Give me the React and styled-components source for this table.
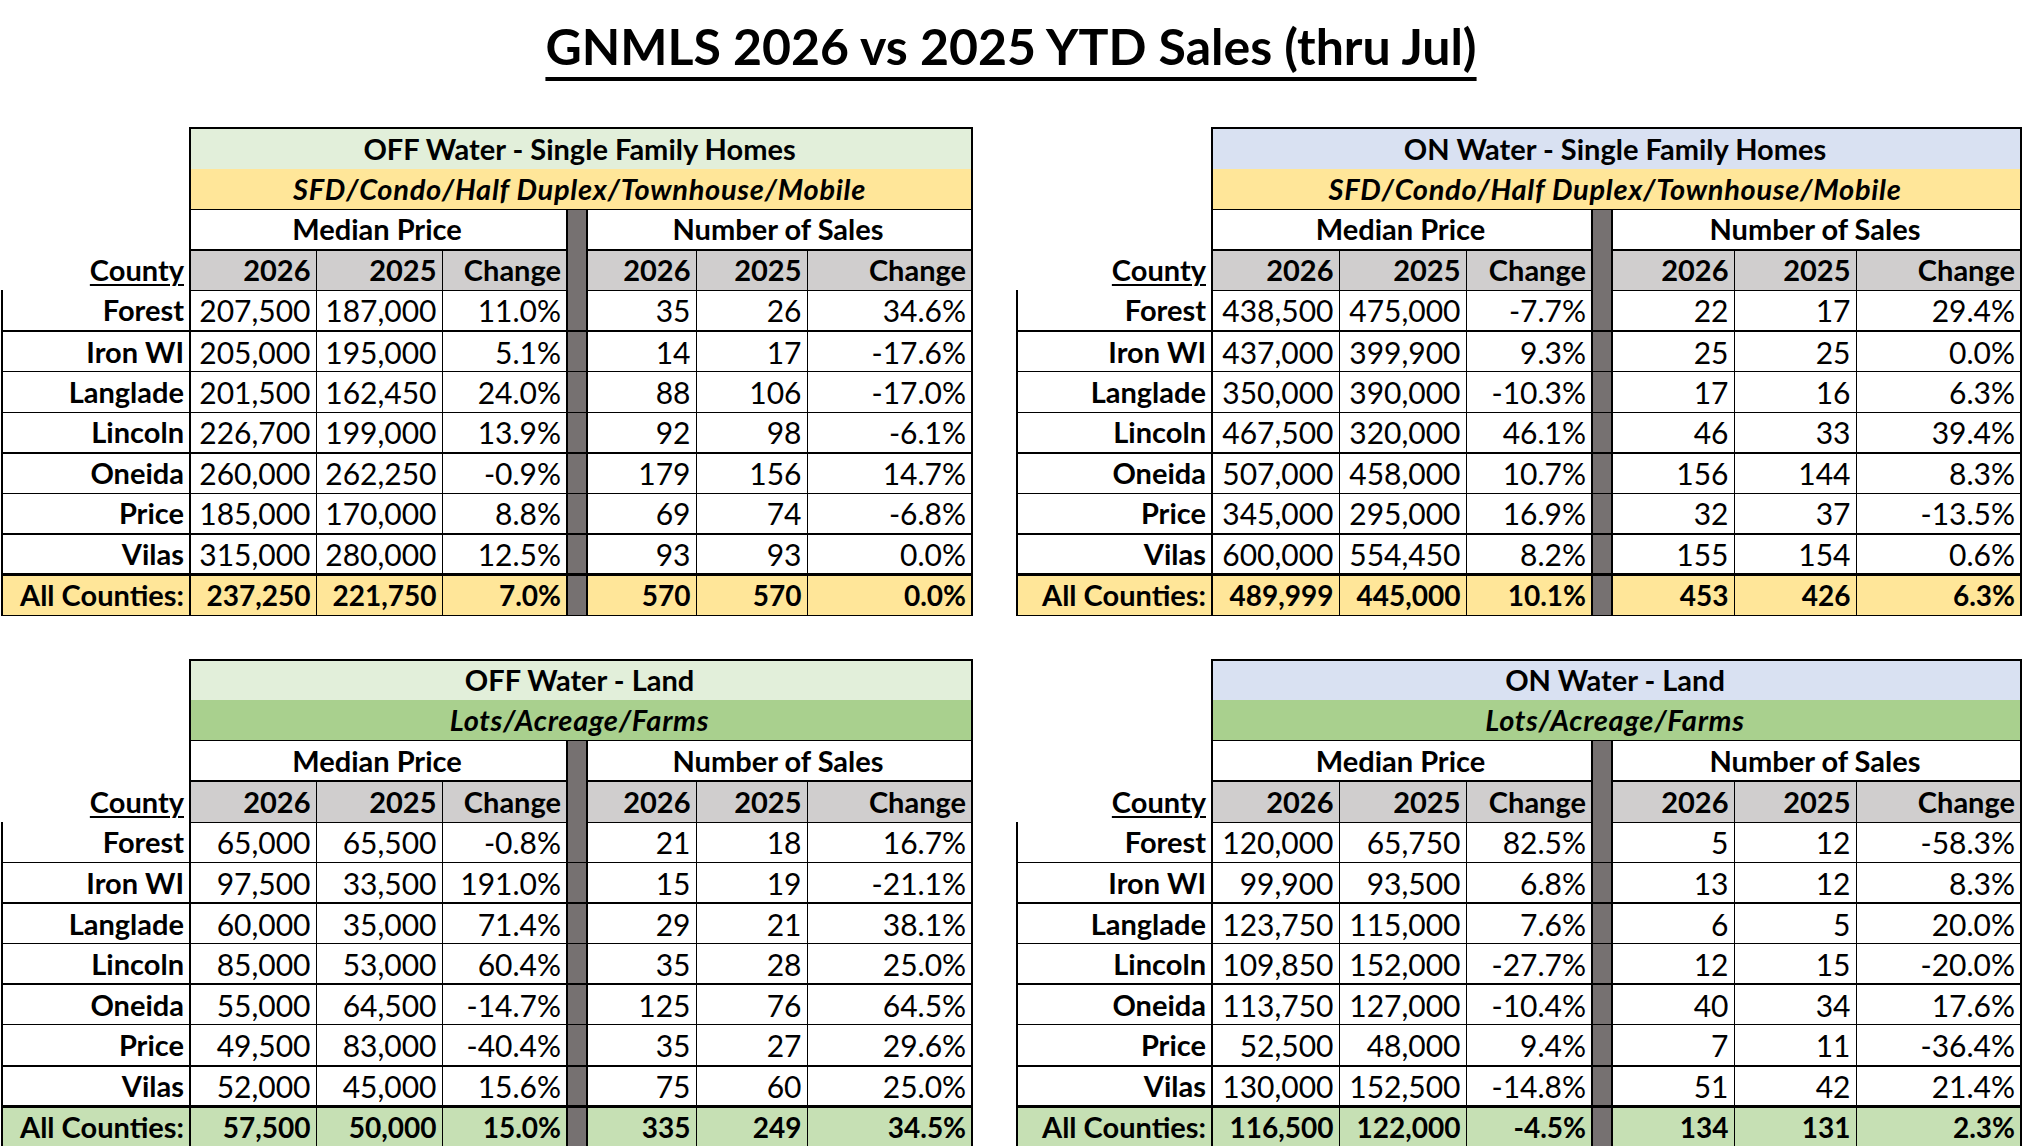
import React from "react";
import styled, { createGlobalStyle, css } from "styled-components";

const GlobalStyle = createGlobalStyle`
  html, body {
    margin: 0;
    padding: 0;
    background: #fff;
  }
  body {
    font-family: Lato, "Open Sans", "Liberation Sans", sans-serif;
    color: #000;
  }
`;

const Page = styled.div`
  width: 2022px;
  height: 1146px;
  overflow: hidden;
  background: #fff;
`;

const Title = styled.h1`
  box-sizing: border-box;
  height: 127px;
  margin: 0;
  padding-top: 16px;
  text-align: center;
  font-size: 50px;
  line-height: 60px;
  font-weight: 700;
  text-decoration: underline;
  text-decoration-thickness: 4px;
  text-underline-offset: 12px;
`;

const Board = styled.div`
  display: grid;
  grid-template-columns: 970px 1004px;
  column-gap: 45px;
  row-gap: 43px;
  padding-left: 1px;
`;

const Sheet = styled.table`
  border-collapse: collapse;
  table-layout: fixed;
  width: 100%;
  font-size: 29px;
`;

const Row = styled.tr`
  height: 40.6px;
`;

const base = css`
  padding: 0 5px 0 2px;
  text-align: right;
  white-space: nowrap;
  overflow: hidden;
  line-height: 32px;
`;

const Blank = styled.td`
  border: none;
  padding: 0;
`;

const BandCell = styled.td`
  ${base};
  text-align: center;
  font-weight: 700;
  background: ${({ $bg }) => $bg};
  border-top: 2px solid #000;
  border-left: 2px solid #000;
  border-right: 2px solid #000;
`;

const SubBandCell = styled.td`
  ${base};
  text-align: center;
  font-weight: 700;
  font-style: italic;
  letter-spacing: 0.7px;
  background: ${({ $bg }) => $bg};
  border-left: 2px solid #000;
  border-right: 2px solid #000;
  border-bottom: 1px solid #000;
`;

const GroupCell = styled.td`
  ${base};
  text-align: center;
  font-weight: 700;
  background: #fff;
  border-bottom: 2px solid #000;
  border-left: ${({ $first }) => ($first ? "2px" : "1px")} solid #000;
  border-right: ${({ $last }) => ($last ? "2px" : "1px")} solid #000;
`;

const SepCell = styled.td`
  padding: 0;
  background: #767171;
  border-left: 2px solid #000;
  border-right: 2px solid #000;
`;

const CountyHead = styled.td`
  ${base};
  font-weight: 700;
  border: none;
  border-right: 2px solid #000;
  span {
    text-decoration: underline;
    text-decoration-thickness: 2px;
    text-underline-offset: 3px;
  }
`;

const YearCell = styled.td`
  ${base};
  font-weight: 700;
  background: #d0cece;
  border: 1px solid #000;
  border-right-width: ${({ $last }) => ($last ? "2px" : "1px")};
`;

const CountyCell = styled.td`
  ${base};
  font-weight: 700;
  border-left: 2px solid #000;
  border-right: 2px solid #000;
`;

const ValueCell = styled.td`
  ${base};
  font-size: 30px;
  border-left: 1px solid #000;
  border-right: ${({ $last }) => ($last ? "2px" : "1px")} solid #000;
`;

const DataRow = styled(Row)`
  td {
    border-bottom: ${({ $heavy }) => ($heavy ? "2px" : "1px")} solid #000;
  }
`;

const TotalRow = styled(Row)`
  td {
    font-weight: 700;
    background: ${({ $bg }) => $bg};
    border-top: 3px solid #000;
    border-bottom: 1px solid #000;
  }
  ${ValueCell} {
    font-size: 28px;
  }
  ${SepCell} {
    background: #767171;
  }
`;

const OFF_COLS = [188, 126, 126, 125, 20, 109, 111, 165];
const ON_COLS = [195, 127, 127, 126, 20, 122, 122, 165];

const COUNTIES = ["Forest", "Iron WI", "Langlade", "Lincoln", "Oneida", "Price", "Vilas"];

const homesTone = { sub: "#ffe699", total: "#ffe699" };
const landTone = { sub: "#a9d08e", total: "#c6e0b4" };

const blocks = [
  {
    title: "OFF Water - Single Family Homes",
    subtitle: "SFD/Condo/Half Duplex/Townhouse/Mobile",
    band: "#e2efda",
    tone: homesTone,
    cols: OFF_COLS,
    heavy: [0, 3, 5],
    rows: [
      ["207,500", "187,000", "11.0%", "35", "26", "34.6%"],
      ["205,000", "195,000", "5.1%", "14", "17", "-17.6%"],
      ["201,500", "162,450", "24.0%", "88", "106", "-17.0%"],
      ["226,700", "199,000", "13.9%", "92", "98", "-6.1%"],
      ["260,000", "262,250", "-0.9%", "179", "156", "14.7%"],
      ["185,000", "170,000", "8.8%", "69", "74", "-6.8%"],
      ["315,000", "280,000", "12.5%", "93", "93", "0.0%"],
    ],
    total: ["237,250", "221,750", "7.0%", "570", "570", "0.0%"],
  },
  {
    title: "ON Water - Single Family Homes",
    subtitle: "SFD/Condo/Half Duplex/Townhouse/Mobile",
    band: "#d9e1f2",
    tone: homesTone,
    cols: ON_COLS,
    heavy: [0, 3, 5],
    rows: [
      ["438,500", "475,000", "-7.7%", "22", "17", "29.4%"],
      ["437,000", "399,900", "9.3%", "25", "25", "0.0%"],
      ["350,000", "390,000", "-10.3%", "17", "16", "6.3%"],
      ["467,500", "320,000", "46.1%", "46", "33", "39.4%"],
      ["507,000", "458,000", "10.7%", "156", "144", "8.3%"],
      ["345,000", "295,000", "16.9%", "32", "37", "-13.5%"],
      ["600,000", "554,450", "8.2%", "155", "154", "0.6%"],
    ],
    total: ["489,999", "445,000", "10.1%", "453", "426", "6.3%"],
  },
  {
    title: "OFF Water - Land",
    subtitle: "Lots/Acreage/Farms",
    band: "#e2efda",
    tone: landTone,
    cols: OFF_COLS,
    heavy: [1, 3, 5],
    rows: [
      ["65,000", "65,500", "-0.8%", "21", "18", "16.7%"],
      ["97,500", "33,500", "191.0%", "15", "19", "-21.1%"],
      ["60,000", "35,000", "71.4%", "29", "21", "38.1%"],
      ["85,000", "53,000", "60.4%", "35", "28", "25.0%"],
      ["55,000", "64,500", "-14.7%", "125", "76", "64.5%"],
      ["49,500", "83,000", "-40.4%", "35", "27", "29.6%"],
      ["52,000", "45,000", "15.6%", "75", "60", "25.0%"],
    ],
    total: ["57,500", "50,000", "15.0%", "335", "249", "34.5%"],
  },
  {
    title: "ON Water - Land",
    subtitle: "Lots/Acreage/Farms",
    band: "#d9e1f2",
    tone: landTone,
    cols: ON_COLS,
    heavy: [1, 3, 5],
    rows: [
      ["120,000", "65,750", "82.5%", "5", "12", "-58.3%"],
      ["99,900", "93,500", "6.8%", "13", "12", "8.3%"],
      ["123,750", "115,000", "7.6%", "6", "5", "20.0%"],
      ["109,850", "152,000", "-27.7%", "12", "15", "-20.0%"],
      ["113,750", "127,000", "-10.4%", "40", "34", "17.6%"],
      ["52,500", "48,000", "9.4%", "7", "11", "-36.4%"],
      ["130,000", "152,500", "-14.8%", "51", "42", "21.4%"],
    ],
    total: ["116,500", "122,000", "-4.5%", "134", "131", "2.3%"],
  },
];

function Values({ values }) {
  return (
    <>
      <ValueCell>{values[0]}</ValueCell>
      <ValueCell>{values[1]}</ValueCell>
      <ValueCell>{values[2]}</ValueCell>
      <SepCell />
      <ValueCell>{values[3]}</ValueCell>
      <ValueCell>{values[4]}</ValueCell>
      <ValueCell $last>{values[5]}</ValueCell>
    </>
  );
}

function SalesTable({ block }) {
  return (
    <Sheet>
      <colgroup>
        {block.cols.map((w, i) => (
          <col key={i} style={{ width: w }} />
        ))}
      </colgroup>
      <tbody>
        <Row>
          <Blank />
          <BandCell colSpan={7} $bg={block.band}>
            {block.title}
          </BandCell>
        </Row>
        <Row>
          <Blank />
          <SubBandCell colSpan={7} $bg={block.tone.sub}>
            {block.subtitle}
          </SubBandCell>
        </Row>
        <Row>
          <Blank />
          <GroupCell colSpan={3} $first>
            Median Price
          </GroupCell>
          <SepCell />
          <GroupCell colSpan={3} $last>
            Number of Sales
          </GroupCell>
        </Row>
        <Row>
          <CountyHead>
            <span>County</span>
          </CountyHead>
          <YearCell>2026</YearCell>
          <YearCell>2025</YearCell>
          <YearCell>Change</YearCell>
          <SepCell />
          <YearCell>2026</YearCell>
          <YearCell>2025</YearCell>
          <YearCell $last>Change</YearCell>
        </Row>
        {block.rows.map((values, i) => (
          <DataRow key={COUNTIES[i]} $heavy={block.heavy.includes(i)}>
            <CountyCell>{COUNTIES[i]}</CountyCell>
            <Values values={values} />
          </DataRow>
        ))}
        <TotalRow $bg={block.tone.total}>
          <CountyCell>All Counties:</CountyCell>
          <Values values={block.total} />
        </TotalRow>
      </tbody>
    </Sheet>
  );
}

export default function App() {
  return (
    <Page>
      <GlobalStyle />
      <Title>GNMLS 2026 vs 2025 YTD Sales (thru Jul)</Title>
      <Board>
        {blocks.map((block) => (
          <SalesTable key={block.title} block={block} />
        ))}
      </Board>
    </Page>
  );
}
